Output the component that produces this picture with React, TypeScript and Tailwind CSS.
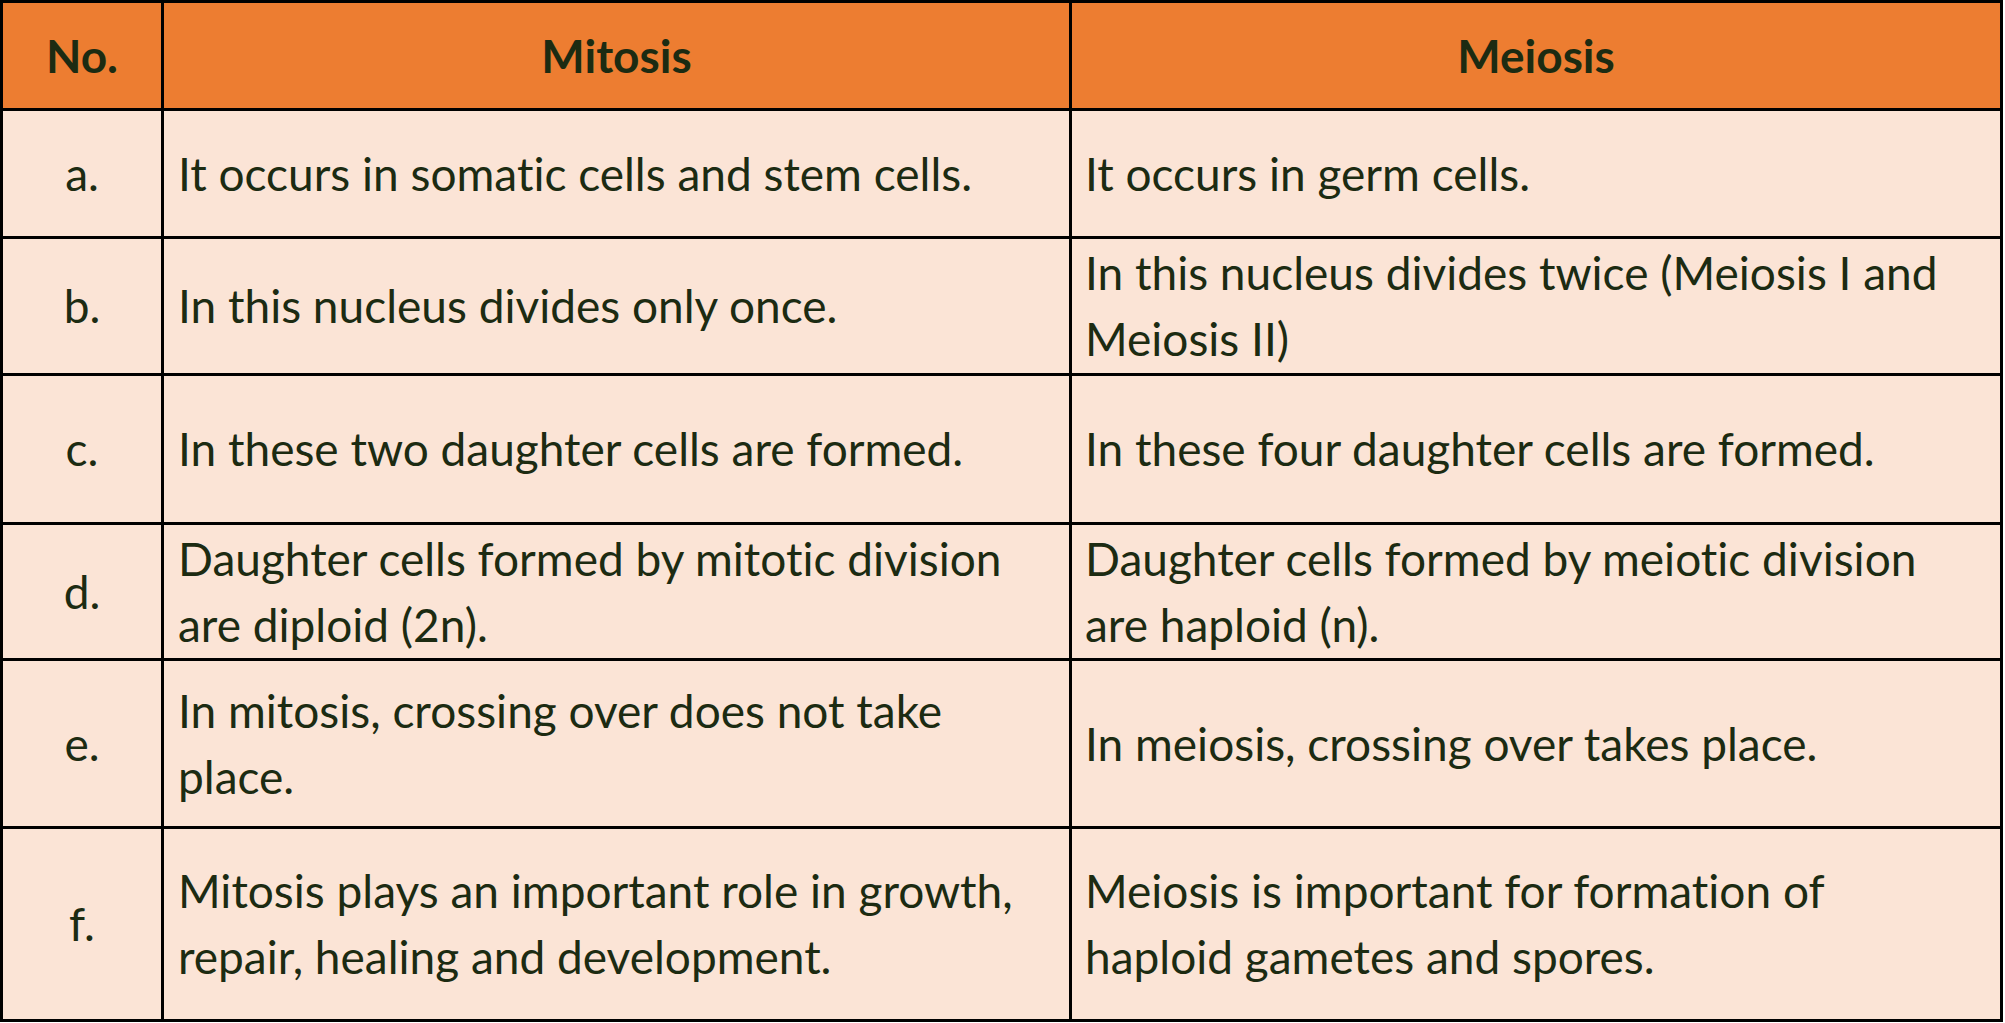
import React from "react";

type Row = { no: string; mitosis: React.ReactNode; meiosis: React.ReactNode; h: string };

const rows: Row[] = [
  { no: "a.", h: "h-[128px]", mitosis: "It occurs in somatic cells and stem cells.", meiosis: "It occurs in germ cells." },
  {
    no: "b.",
    h: "h-[137px]",
    mitosis: "In this nucleus divides only once.",
    meiosis: (
      <>
        In this nucleus divides twice (Meiosis I and
        <br />
        Meiosis II)
      </>
    ),
  },
  {
    no: "c.",
    h: "h-[149px]",
    mitosis: "In these two daughter cells are formed.",
    meiosis: "In these four daughter cells are formed.",
  },
  {
    no: "d.",
    h: "h-[136px]",
    mitosis: (
      <>
        Daughter cells formed by mitotic division
        <br />
        are diploid (2n).
      </>
    ),
    meiosis: (
      <>
        Daughter cells formed by meiotic division
        <br />
        are haploid (n).
      </>
    ),
  },
  {
    no: "e.",
    h: "h-[168px]",
    mitosis: (
      <>
        In mitosis, crossing over does not take
        <br />
        place.
      </>
    ),
    meiosis: "In meiosis, crossing over takes place.",
  },
  {
    no: "f.",
    h: "h-[193px]",
    mitosis: (
      <>
        Mitosis plays an important role in growth,
        <br />
        repair, healing and development.
      </>
    ),
    meiosis: (
      <>
        Meiosis is important for formation of
        <br />
        haploid gametes and spores.
      </>
    ),
  },
];

const cell = "border-r-[3px] border-b-[3px] border-black flex items-center";

export default function App() {
  return (
    <div className="w-[2005px] h-[1023px] bg-white font-['Lato',sans-serif] text-[#1c2b12] text-[46px] leading-[66px] [font-variant-ligatures:none]">
      <div className="w-[2003px] border-t-[3px] border-l-[3px] border-black grid grid-cols-[161px_908px_931px]">
        {/* Header */}
        <div className={`${cell} h-[108px] bg-[#ed7d31] justify-center font-bold`}>No.</div>
        <div className={`${cell} h-[108px] bg-[#ed7d31] justify-center font-bold`}>Mitosis</div>
        <div className={`${cell} h-[108px] bg-[#ed7d31] justify-center font-bold`}>Meiosis</div>

        {rows.map((r) => (
          <React.Fragment key={r.no}>
            <div className={`${cell} ${r.h} bg-[#fbe4d6] justify-center`}>{r.no}</div>
            <div className={`${cell} ${r.h} bg-[#fbe4d6] px-[14px] whitespace-nowrap`}>
              <p>{r.mitosis}</p>
            </div>
            <div className={`${cell} ${r.h} bg-[#fbe4d6] px-[13px] whitespace-nowrap`}>
              <p>{r.meiosis}</p>
            </div>
          </React.Fragment>
        ))}
      </div>
    </div>
  );
}
